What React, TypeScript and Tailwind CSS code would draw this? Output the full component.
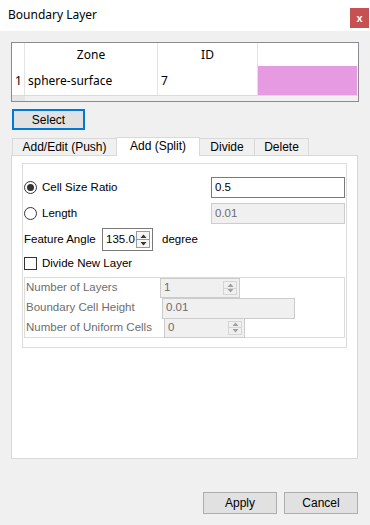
import React from "react";

const formFont = "font-['Liberation_Sans',Arial,sans-serif]";
const uiFont = "font-['Noto_Sans','Open_Sans',sans-serif]";

function Arrows({ disabled }: { disabled?: boolean }) {
  const fill = disabled ? "#a0a0a0" : "#333333";
  return (
    <div
      className={`flex w-[14px] flex-col self-stretch border my-[2px] mr-[2px] ${
        disabled ? "border-[#d6d6d6] bg-[#f0f0f0]" : "border-[#9a9a9a] bg-[#f5f5f5]"
      }`}
    >
      <div className="flex flex-1 items-center justify-center border-b border-inherit">
        <svg width="7" height="4" viewBox="0 0 7 4">
          <path d="M0.5 4 L3.5 0.5 L6.5 4 Z" fill={fill} />
        </svg>
      </div>
      <div className="flex flex-1 items-center justify-center">
        <svg width="7" height="4" viewBox="0 0 7 4">
          <path d="M0.5 0 L3.5 3.5 L6.5 0 Z" fill={fill} />
        </svg>
      </div>
    </div>
  );
}

function Spin({ value, width, height, disabled }: { value: string; width: string; height: string; disabled?: boolean }) {
  return (
    <div
      className={`flex items-center border ${width} ${height} ${
        disabled ? "border-[#cccccc] bg-[#f0f0f0] text-[#6d6d6d]" : "border-[#7a7a7a] bg-white text-black"
      }`}
    >
      <span className="flex-1 pl-[3px] text-[11.5px] leading-none">{value}</span>
      <Arrows disabled={disabled} />
    </div>
  );
}

function Radio({ checked }: { checked?: boolean }) {
  return (
    <div className="flex h-[13px] w-[13px] items-center justify-center rounded-full border border-[#333333] bg-white">
      {checked && <div className="h-[7px] w-[7px] rounded-full bg-[#333333]" />}
    </div>
  );
}

export default function App() {
  return (
    <div className={`flex h-[525px] w-[370px] flex-col overflow-hidden bg-[#f0f0f0] text-black ${formFont}`}>
      {/* Title bar */}
      <div className="flex h-[31px] items-start justify-between bg-white">
        <span className={`pl-2 pt-[7px] text-[12px] leading-[16px] ${uiFont}`}>Boundary Layer</span>
        <div className="mr-px mt-[8px] flex h-[20px] w-[19px] items-center justify-center bg-[#c75050] text-[11px] font-bold leading-none text-white">
          x
        </div>
      </div>

      <div className="flex flex-col px-[11px]">
        {/* Zone table */}
        <div className={`mt-[11px] flex h-[60px] w-[348px] flex-col border border-[#8a8a90] bg-white text-[12px] ${uiFont}`}>
          <div className="flex h-[23px]">
            <div className="w-[13px] border-r border-[#e3e3e3]" />
            <div className="flex w-[133px] items-center justify-center border-r border-[#e3e3e3]">Zone</div>
            <div className="flex w-[100px] items-center justify-center border-r border-[#e3e3e3]">ID</div>
            <div className="flex-1" />
          </div>
          <div className="flex h-[30px] border-b border-[#dadada]">
            <div className="flex w-[13px] items-center justify-center border-r border-[#e3e3e3] pl-px">1</div>
            <div className="flex w-[133px] items-center border-r border-[#e3e3e3] pl-[3px]">sphere-surface</div>
            <div className="flex w-[100px] items-center border-r border-[#e3e3e3] pl-[3px]">7</div>
            <div className="mr-px flex-1 bg-[#e59ae2]" />
          </div>
          <div className="flex flex-1 bg-[#f0f0f0]">
            <div className="w-[13px] bg-[#e6e6e6]" />
          </div>
        </div>

        {/* Select */}
        <button className="ml-px mt-[7px] flex h-[21px] w-[73px] items-center justify-center border-2 border-[#0078d7] bg-[#e1e1e1] text-[12px]">
          Select
        </button>

        {/* Tabs */}
        <div className="relative z-10 mt-[7px] -mb-px flex h-[19px] items-end pl-px text-[12px]">
          <div className="mb-px flex h-[17px] w-[104px] items-center justify-center border-l border-t border-[#d9d9d9]">
            Add/Edit (Push)
          </div>
          <div className="flex h-[19px] w-[84px] items-center justify-center border-l border-r border-t border-[#d9d9d9] bg-white pb-[2px]">
            Add (Split)
          </div>
          <div className="mb-px flex h-[17px] w-[55px] items-center justify-center border-r border-t border-[#d9d9d9]">
            Divide
          </div>
          <div className="mb-px flex h-[17px] w-[54px] items-center justify-center border-r border-t border-[#d9d9d9]">
            Delete
          </div>
        </div>

        {/* Tab panel */}
        <div className="flex h-[304px] w-[347px] flex-col border border-[#d9d9d9] bg-white pl-[10px] pt-[7px]">
          <div className="flex h-[185px] w-[325px] flex-col border border-[#dcdcdc] text-[11.5px]">
            <div className="mt-[13px] flex h-[21px] items-center pl-px pr-px">
              <Radio checked />
              <span className="ml-[5px] flex-1">Cell Size Ratio</span>
              <div className="flex h-[21px] w-[134px] items-center border border-[#7a7a7a] pl-[3px]">0.5</div>
            </div>
            <div className="mt-[5px] flex h-[21px] items-center pl-px pr-px">
              <Radio />
              <span className="ml-[5px] flex-1">Length</span>
              <div className="flex h-[21px] w-[134px] items-center border border-[#cccccc] bg-[#f0f0f0] pl-[3px] text-[#6d6d6d]">
                0.01
              </div>
            </div>
            <div className="mt-[4px] flex h-[23px] items-center pl-px">
              <span className="w-[78px]">Feature Angle</span>
              <Spin value="135.0" width="w-[51px]" height="h-[23px]" />
              <span className="ml-[9px]">degree</span>
            </div>
            <div className="mt-[4px] flex h-[17px] items-center pl-px">
              <div className="h-[13px] w-[13px] border border-[#333333] bg-white" />
              <span className="ml-[5px]">Divide New Layer</span>
            </div>
            <div className="ml-px mt-[5px] flex h-[61px] w-[321px] flex-col border border-[#dcdcdc] text-[#6d6d6d]">
              <div className="flex h-[20px] items-center">
                <span className="w-[135px] pl-px">Number of Layers</span>
                <Spin value="1" width="w-[80px]" height="h-[20px]" disabled />
              </div>
              <div className="flex h-[20px] items-center">
                <span className="w-[137px] pl-px">Boundary Cell Height</span>
                <div className="flex h-[21px] w-[133px] items-center border border-[#cccccc] bg-[#f0f0f0] pl-[3px]">0.01</div>
              </div>
              <div className="flex h-[19px] items-center">
                <span className="w-[139px] pl-px">Number of Uniform Cells</span>
                <Spin value="0" width="w-[81px]" height="h-[20px]" disabled />
              </div>
            </div>
          </div>
        </div>

        {/* Footer buttons */}
        <div className="mr-px mt-[33px] flex justify-end gap-[7px] text-[12px]">
          <button className="flex h-[22px] w-[74px] items-center justify-center border border-[#adadad] bg-[#e1e1e1]">
            Apply
          </button>
          <button className="flex h-[22px] w-[74px] items-center justify-center border border-[#adadad] bg-[#e1e1e1]">
            Cancel
          </button>
        </div>
      </div>
    </div>
  );
}
